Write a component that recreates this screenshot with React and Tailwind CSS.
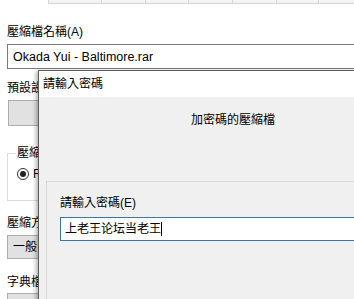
import React from "react";

const cjk = "font-['Liberation_Sans','Noto_Sans_CJK_TC',sans-serif]";

function HeaderStrip() {
  const cells = [58, 48, 48, 48, 48, 46, 40];
  return (
    <div className="flex h-[4px] ml-[48px] bg-[#f4f4f4] border-b border-[#d6d6d6]">
      {cells.map((w, i) => (
        <div key={i} className="h-full border-l border-[#d6d6d6]" style={{ width: w }} />
      ))}
    </div>
  );
}

function PasswordDialog() {
  return (
    <div className="absolute left-[38px] top-[70px] w-[340px] h-[260px] border-l border-t border-[#5c5c5c] bg-[#f0f0f0] shadow-[-2px_1px_4px_rgba(0,0,0,0.3)]">
      <div className="h-[26px] bg-white pl-[4px] pt-[5px] leading-[16px]">請輸入密碼</div>
      <div className="pt-[15px] pl-[152px] leading-[16px]">加密碼的壓縮檔</div>
      <div className="mt-[53px] ml-[7px] h-[120px] border-t border-l border-[#d9d9d9] pt-[13px] pl-[13px]">
        <div className="leading-[16px]">請輸入密碼(E)</div>
        <div className="mt-[6px] h-[24px] w-[300px] border border-[#3a76a8] bg-white flex items-center pl-[4px]">
          <span className="leading-[16px]">上老王论坛当老王</span>
          <span className="w-px h-[14px] bg-black" />
        </div>
      </div>
    </div>
  );
}

export default function App() {
  return (
    <div className={`relative w-[354px] h-[299px] overflow-hidden bg-white text-[12px] text-black ${cjk}`}>
      <HeaderStrip />
      <div className="pl-[7px]">
        <div className="mt-[20px] leading-[16px]">壓縮檔名稱(A)</div>
        <div className="mt-[4px] h-[25px] w-[400px] border border-[#7a7a7a] flex items-center pl-[5px] leading-[16px] text-[12.5px]">
          Okada Yui - Baltimore.rar
        </div>
        <div className="mt-[11px] leading-[16px]">預設設定</div>
        <div className="mt-[4px] ml-[1px] h-[26px] w-[100px] border border-[#adadad] bg-[#e1e1e1]" />
        <div className="relative mt-[27px] h-[48px] w-[300px] border border-[#dcdcdc]">
          <span className="absolute left-[8px] top-[-9px] bg-white px-[1px] leading-[16px]">壓縮格式</span>
          <div className="flex items-center gap-[4px] pl-[9px] pt-[12px]">
            <span className="w-[12px] h-[12px] rounded-full border border-[#333] flex items-center justify-center">
              <span className="w-[6px] h-[6px] rounded-full bg-[#222]" />
            </span>
            <span className="leading-[16px]">RAR</span>
          </div>
        </div>
        <div className="mt-[14px] leading-[16px]">壓縮方式</div>
        <div className="mt-[4px] h-[24px] w-[100px] border border-[#adadad] bg-[#e1e1e1] flex items-center pl-[5px] leading-[16px]">
          一般
        </div>
        <div className="mt-[15px] leading-[16px]">字典檔大小</div>
        <div className="mt-[3px] h-[24px] w-[100px] border border-[#adadad] bg-[#e1e1e1]" />
      </div>
      <PasswordDialog />
    </div>
  );
}
